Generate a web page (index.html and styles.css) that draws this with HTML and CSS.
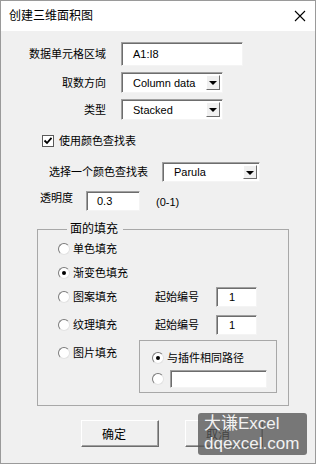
FILE: index.html
```html
<!DOCTYPE html>
<html lang="zh-CN">
<head>
    <meta charset="UTF-8">
    <meta name="viewport" content="width=device-width, initial-scale=1.0">
    <title>创建三维面积图</title>
    <link rel="stylesheet" href="styles.css">
</head>
<body>
<div class="dialog">
    <div class="titlebar">
        <span class="title">创建三维面积图</span>
        <svg class="close" width="12" height="12" viewBox="0 0 12 12">
            <path d="M1 1 L11 11 M11 1 L1 11" stroke="#000" stroke-width="1.1" fill="none"/>
        </svg>
    </div>

    <div class="content">
        <div class="fields">
            <span class="lbl">数据单元格区域</span>
            <div class="edit range">A1:I8</div>

            <span class="lbl">取数方向</span>
            <div class="combo"><span class="combo-text">Column data</span><span class="drop"></span></div>

            <span class="lbl">类型</span>
            <div class="combo"><span class="combo-text">Stacked</span><span class="drop"></span></div>
        </div>

        <div class="check-row">
            <span class="checkbox">
                <svg width="10" height="10" viewBox="0 0 10 10">
                    <path d="M1.5 4.5 L4 7 L8.5 1.8" stroke="#000" stroke-width="1.8" fill="none"/>
                </svg>
            </span>
            使用颜色查找表
        </div>

        <div class="map-row">
            <span class="map-label">选择一个颜色查找表</span>
            <div class="combo map"><span class="combo-text">Parula</span><span class="drop"></span></div>
        </div>

        <div class="alpha-row">
            <span class="alpha-label">透明度</span>
            <div class="edit alpha">0.3</div>
            <span class="hint">(0-1)</span>
        </div>

        <fieldset class="group">
            <legend>面的填充</legend>

            <div class="opt-row">
                <span class="opt"><span class="radio"></span>单色填充</span>
            </div>
            <div class="opt-row r2">
                <span class="opt"><span class="radio on"></span>渐变色填充</span>
            </div>
            <div class="opt-row r3">
                <span class="opt wide"><span class="radio"></span>图案填充</span>
                <span class="start">起始编号</span>
                <div class="edit num">1</div>
            </div>
            <div class="opt-row r4">
                <span class="opt wide"><span class="radio"></span>纹理填充</span>
                <span class="start">起始编号</span>
                <div class="edit num">1</div>
            </div>
            <div class="opt-row r5">
                <span class="opt pic"><span class="radio"></span>图片填充</span>
                <div class="subgroup">
                    <div class="sub-row"><span class="radio on"></span>与插件相同路径</div>
                    <div class="sub-row path"><span class="radio"></span><div class="edit path-edit"></div></div>
                </div>
            </div>
        </fieldset>

        <div class="buttons">
            <button class="btn">确定</button>
            <button class="btn">取消</button>
        </div>
    </div>

    <div class="watermark">大谦Excel<br>dqexcel.com</div>
</div>
</body>
</html>
```

FILE: styles.css
```css
body {
    margin: 0;
    font-family: "Liberation Sans", "Noto Sans CJK SC", sans-serif;
    font-size: 11px;
    color: #000;
}
.dialog {
    position: relative;
    width: 316px;
    height: 464px;
    background-color: #f0f0f0;
    outline: 1px solid #9a9a9a;
    outline-offset: -1px;
    overflow: hidden;
}
.titlebar {
    height: 31px;
    background-color: #fff;
    display: flex;
    align-items: center;
    justify-content: space-between;
    padding: 0 9px;
}
.title {
    font-size: 12px;
    line-height: 16px;
}
.close {
    display: block;
    margin-right: 1px;
}

/* top three rows */
.fields {
    display: grid;
    grid-template-columns: 106px auto;
    column-gap: 15px;
    row-gap: 6px;
    align-items: center;
    justify-items: start;
    padding-top: 11px;
}
.lbl {
    justify-self: end;
    line-height: 14px;
}
.edit {
    box-sizing: border-box;
    background-color: #fff;
    border: 1px solid;
    border-color: #a0a0a0 #f4f4f4 #f4f4f4 #a0a0a0;
    box-shadow: inset 1px 1px 0 #6d6d6d;
    display: flex;
    align-items: center;
    line-height: 14px;
}
.range {
    width: 122px;
    height: 24px;
    padding-left: 11px;
}
.combo {
    box-sizing: border-box;
    width: 102px;
    height: 21px;
    background-color: #fff;
    border: 1px solid;
    border-color: #a0a0a0 #f4f4f4 #f4f4f4 #a0a0a0;
    box-shadow: inset 1px 1px 0 #6d6d6d;
    display: flex;
    align-items: center;
}
.combo-text {
    padding-left: 11px;
    line-height: 14px;
}
.drop {
    position: relative;
    box-sizing: border-box;
    width: 14px;
    height: 15px;
    margin-left: auto;
    margin-right: 2px;
    background-color: #f0f0f0;
    border: 1px solid;
    border-color: #fff #6d6d6d #6d6d6d #fff;
}
.drop::after {
    content: "";
    position: absolute;
    left: 2px;
    top: 5px;
    border-left: 4px solid transparent;
    border-right: 4px solid transparent;
    border-top: 4px solid #000;
}

.check-row {
    display: flex;
    align-items: center;
    gap: 5px;
    height: 14px;
    margin-top: 14px;
    padding-left: 42px;
    line-height: 14px;
}
.checkbox {
    box-sizing: border-box;
    width: 12px;
    height: 12px;
    background-color: #fff;
    border: 1px solid #5a5a5a;
    display: flex;
    align-items: center;
    justify-content: center;
}

.map-row {
    display: flex;
    align-items: center;
    margin-top: 14px;
    padding-left: 49px;
}
.map-label {
    width: 113px;
    line-height: 14px;
}
.map {
    width: 98px;
    height: 20px;
}
.map .drop {
    height: 14px;
}

.alpha-row {
    display: flex;
    align-items: flex-start;
    margin-top: 9px;
    padding-left: 40px;
}
.alpha-label {
    width: 46px;
    line-height: 14px;
}
.alpha {
    width: 54px;
    height: 20px;
    padding-left: 10px;
}
.hint {
    margin-left: 16px;
    margin-top: 4px;
    line-height: 14px;
}

/* fill group */
.group {
    box-sizing: border-box;
    width: 252px;
    margin: 10px 0 0 37px;
    padding: 2px 0 12px 20px;
    border: 1px solid #a8a8a8;
    min-width: 0;
}
.group legend {
    margin-left: 9px;
    padding: 0 5px 0 3px;
    font-size: 12px;
    line-height: 16px;
}
.opt-row {
    display: flex;
    align-items: center;
    height: 20px;
}
.r2 { margin-top: 4px; }
.r3 { margin-top: 4px; }
.r4 { margin-top: 8px; }
.r5 {
    margin-top: 5px;
    height: auto;
    align-items: flex-start;
}
.opt {
    display: flex;
    align-items: center;
    gap: 3px;
    line-height: 14px;
}
.wide {
    width: 97px;
}
.pic {
    width: 81px;
    margin-top: 6px;
}
.radio {
    position: relative;
    box-sizing: border-box;
    width: 12px;
    height: 12px;
    border-radius: 50%;
    background-color: #fff;
    border: 1px solid;
    border-color: #7a7a7a #e2e2e2 #e2e2e2 #7a7a7a;
    flex-shrink: 0;
}
.radio.on::after {
    content: "";
    position: absolute;
    left: 3px;
    top: 3px;
    width: 4px;
    height: 4px;
    border-radius: 50%;
    background-color: #000;
}
.start {
    width: 61px;
    line-height: 14px;
}
.num {
    width: 41px;
    height: 20px;
    padding-left: 12px;
}

.subgroup {
    box-sizing: border-box;
    width: 138px;
    height: 53px;
    padding: 10px 0 0 12px;
    border: 1px solid #a8a8a8;
}
.sub-row {
    display: flex;
    align-items: center;
    gap: 3px;
    line-height: 14px;
}
.path {
    margin-top: 5px;
    gap: 6px;
}
.path-edit {
    width: 97px;
    height: 18px;
}

.buttons {
    display: flex;
    gap: 26px;
    margin-top: 14px;
    padding-left: 81px;
}
.btn {
    box-sizing: border-box;
    width: 78px;
    height: 27px;
    padding: 0 12px 0 0;
    background-color: #f0f0f0;
    border: 1px solid;
    border-color: #fff #6d6d6d #6d6d6d #fff;
    box-shadow: inset -1px -1px 0 #a0a0a0;
    font-family: "Liberation Sans", "Noto Sans CJK SC", sans-serif;
    font-size: 12px;
    color: #000;
}

.watermark {
    position: absolute;
    left: 198px;
    top: 413px;
    box-sizing: border-box;
    width: 109px;
    height: 42px;
    padding: 1px 0 0 6px;
    border-radius: 3px;
    background-color: rgba(85, 85, 85, 0.78);
    color: #f2f2f2;
    font-size: 17px;
    line-height: 20px;
}
```
